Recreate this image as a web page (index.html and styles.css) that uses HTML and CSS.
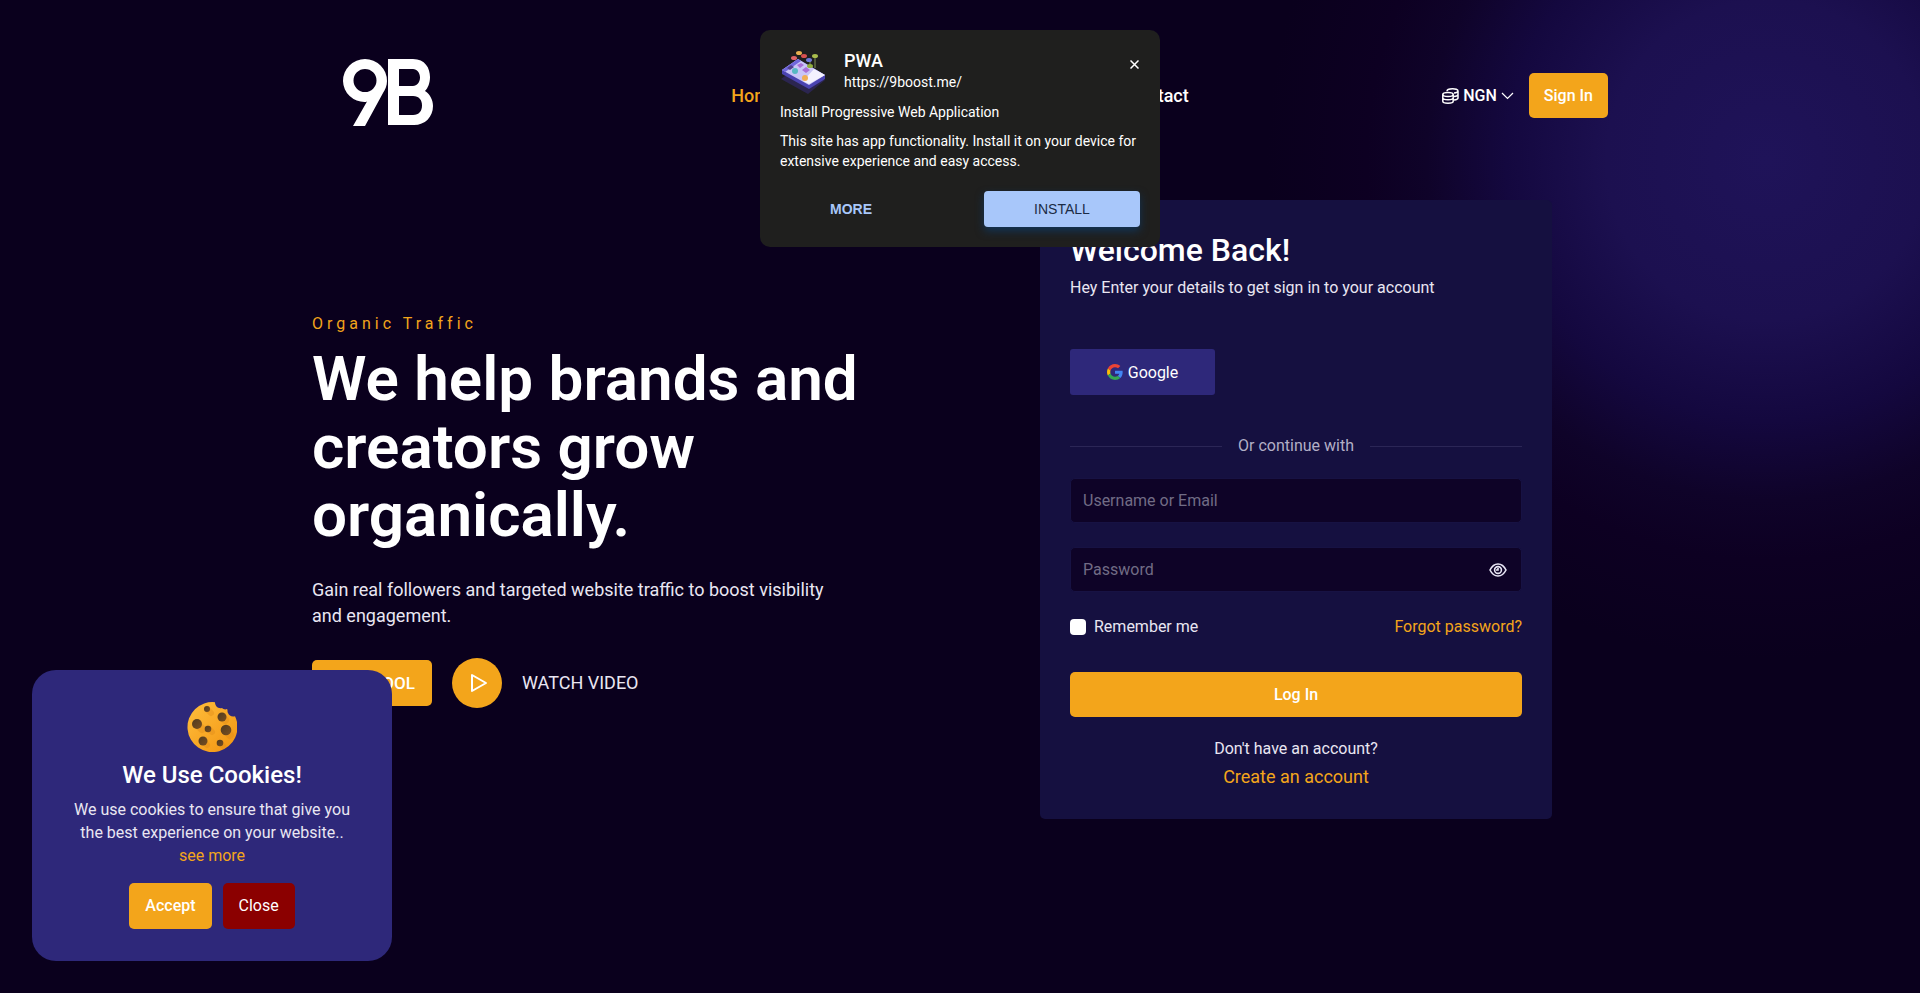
FILE: index.html
```
<!DOCTYPE html>
<html lang="en">

<head>
    <meta charset="UTF-8">
    <meta name="viewport" content="width=device-width, initial-scale=1.0">
    <title>9Boost - Home</title>
    <link rel="stylesheet" href="styles.css">
</head>

<body>
    <header class="header">
        <div class="container header-inner">
            <a href="#" class="logo" aria-label="9B">
                <svg width="90" height="67" viewBox="0 0 90 67" fill="#fff" fill-rule="evenodd">
                    <path d="M22 0A22 22 0 0 1 44 22C44 27 42 31 40 34L22 67H10L24 42.500C23 43 22.500 43 22 43A21.500 21.500 0 0 1 0 22A22 22 0 0 1 22 0ZM22 10a11.500 11.500 0 1 0 0 23 11.500 11.500 0 0 0 0-23Z" />
                    <path d="M45 0H70C82 0 87 9 87 18C87 24 85 29 82 32C87 35 90 41 90 47C90 58 82 66 71 66H45ZM56 10V27H70C74 27 77 23 77 18.500S74 10 70 10ZM56 37V56H70C76 56 79 52 79 46.500S76 37 70 37Z" />
                </svg>
            </a>
            <nav class="nav">
                <a href="#" class="active">Home</a>
                <a href="#">About</a>
                <a href="#">Services</a>
                <a href="#">Blog</a>
                <a href="#">FAQ</a>
                <a href="#">Contact</a>
            </nav>
            <div class="header-actions">
                <button type="button" class="currency">
                    <svg width="17" height="16" viewBox="0 0 17 16" fill="none" stroke="#fff" stroke-width="1.500">
                        <ellipse cx="6" cy="6.500" rx="5.200" ry="2" />
                        <path d="M.8 6.500v6.700c0 2.600 10.400 2.600 10.400 0V6.500M.8 9.800c0 2.600 10.400 2.600 10.400 0M5 3.200C5 0 16 0 16 3v7c0 1-1.500 1.800-4 2M16 3c0 1.200-1.500 1.800-4 2M16 6.500c0 1.200-1.500 1.800-4 2" />
                    </svg>
                    NGN
                    <svg width="13" height="8" viewBox="0 0 13 8" fill="none" stroke="#fff" stroke-width="1.200">
                        <path d="M1 1l5.500 5.500L12 1" />
                    </svg>
                </button>
                <a href="#" class="btn btn-sm">Sign In</a>
            </div>
        </div>
    </header>

    <main class="container hero">
        <section class="hero-text">
            <p class="subtitle">Organic Traffic</p>
            <h1>We help brands and creators grow organically.</h1>
            <p class="lead">Gain real followers and targeted website traffic to boost visibility and engagement.</p>
            <div class="hero-buttons">
                <a href="#" class="btn btn-tool">FREE TOOL</a>
                <a href="#" class="play" aria-label="Play video">
                    <svg width="18" height="20" viewBox="0 0 18 20" fill="none" stroke="#fff" stroke-width="2" stroke-linejoin="round">
                        <path d="M2 2v16L16 10Z" />
                    </svg>
                </a>
                <a href="#" class="watch">WATCH VIDEO</a>
            </div>
        </section>

        <form class="login-card">
            <h2>Welcome Back!</h2>
            <p>Hey Enter your details to get sign in to your account</p>
            <button type="button" class="google">
                <svg width="16" height="16" viewBox="0 0 48 48">
                    <path fill="#EA4335" d="M24 9.500c3.540 0 6.710 1.220 9.210 3.600l6.850-6.850C35.900 2.380 30.470 0 24 0 14.620 0 6.510 5.380 2.560 13.220l7.980 6.190C12.430 13.720 17.740 9.500 24 9.500z" />
                    <path fill="#4285F4" d="M46.980 24.550c0-1.570-.15-3.090-.38-4.550H24v9.020h12.940c-.58 2.960-2.260 5.480-4.780 7.180l7.730 6c4.510-4.180 7.090-10.360 7.090-17.650z" />
                    <path fill="#FBBC05" d="M10.530 28.590A14.500 14.500 0 0 1 9.770 24c0-1.600.27-3.140.76-4.590l-7.980-6.190A24 24 0 0 0 0 24c0 3.880.92 7.540 2.560 10.780z" />
                    <path fill="#34A853" d="M24 48c6.480 0 11.930-2.130 15.890-5.810l-7.730-6c-2.150 1.450-4.920 2.300-8.160 2.300-6.260 0-11.570-4.220-13.470-9.910l-7.980 6.190C6.510 42.620 14.620 48 24 48z" />
                </svg>
                Google
            </button>
            <div class="divider"><span>Or continue with</span></div>
            <input type="text" class="field" placeholder="Username or Email" aria-label="Username or Email">
            <div class="password">
                <input type="password" class="field" placeholder="Password" aria-label="Password">
                <button type="button" class="eye" aria-label="Show password">
                    <svg width="18" height="14" viewBox="0 0 18 14" fill="none" stroke="#e8e6f5" stroke-width="1.600">
                        <path d="M1 7C3 3 5.800 1 9 1s6 2 8 6c-2 4-4.800 6-8 6S3 11 1 7Z" />
                        <circle cx="9" cy="7" r="3.400" />
                        <path d="M9 5v2H7" />
                    </svg>
                </button>
            </div>
            <div class="options">
                <label><input type="checkbox"> Remember me</label>
                <a href="#">Forgot password?</a>
            </div>
            <button type="submit" class="btn btn-login">Log In</button>
            <p class="signup">Don't have an account?</p>
            <a href="#" class="create">Create an account</a>
        </form>
    </main>

    <!-- install prompt -->
    <div class="pwa" role="dialog" aria-label="Install app">
        <div class="pwa-head">
            <svg width="46" height="46" viewBox="0 0 46 46">
                <path fill="#2b2550" d="M1 29L20 15L45 30L28 44Z" />
                <path fill="#4a43b0" d="M2 20L18 9L45 25V29L29 39L2 24Z" />
                <path fill="#c9c5f7" d="M2 20L18 9L45 25L29 35Z" />
                <path fill="#7067dc" d="M2 20L18 9L21 11L5 22Z" />
                <path fill="#f4f2ff" d="M34 19L45 25L29 34L23 31Z" />
                <path stroke="#7f8f55" d="M35 6v12M30 10v8" />
                <ellipse cx="19" cy="3" rx="3" ry="2" fill="#e8b04f" />
                <ellipse cx="14" cy="8" rx="3" ry="2" fill="#e06367" />
                <ellipse cx="24" cy="6" rx="3" ry="2" fill="#d9504f" />
                <ellipse cx="35" cy="6" rx="3" ry="2" fill="#a9bd4d" />
                <ellipse cx="29" cy="10" rx="3" ry="2" fill="#6f79d8" />
                <ellipse cx="30" cy="16" rx="3" ry="2" fill="#8fae3d" />
                <path fill="#50418f" d="M7 18l4-3 3 2-4 3Z" />
                <path fill="#a86fd6" d="M17 15l4-2 3 2-4 3ZM22 20l4-3 4 3-4 3Z" />
                <circle cx="15" cy="21" r="3" fill="#57b9c4" />
                <circle cx="25" cy="28" r="3" fill="#f0ae55" />
            </svg>
            <div class="pwa-name">
                <strong>PWA</strong>
                <span>https://9boost.me/</span>
            </div>
            <button type="button" class="pwa-close" aria-label="Close">
                <svg width="9" height="9" viewBox="0 0 9 9" stroke="#fff" stroke-width="1.500">
                    <path d="M.5 .5l8 8M8.500 .5l-8 8" />
                </svg>
            </button>
        </div>
        <p>Install Progressive Web Application</p>
        <p>This site has app functionality. Install it on your device for extensive experience and easy access.</p>
        <div class="pwa-buttons">
            <button type="button" class="more">MORE</button>
            <button type="button" class="install">INSTALL</button>
        </div>
    </div>

    <!-- cookie notice -->
    <div class="cookie" role="dialog" aria-label="Cookies">
        <svg width="50" height="50" viewBox="0 0 50 50">
            <defs>
                <linearGradient id="dough" x1="0" y1="0" x2="1" y2="1">
                    <stop offset="0" stop-color="#ffbe3d" />
                    <stop offset="1" stop-color="#f29410" />
                </linearGradient>
                <linearGradient id="chip" x1="0" y1="0" x2="1" y2="1">
                    <stop offset="0" stop-color="#4f3a20" />
                    <stop offset="1" stop-color="#7a4f20" />
                </linearGradient>
            </defs>
            <path fill="url(#dough)" d="M28 .2A25 25 0 1 0 48 14.200C45 15 42 14 41 11C40 9 41 8 40 7C38 8 36 7 35 6C31 7 28 4 28 .2Z" />
            <g stroke="#e08a18" stroke-linecap="round" opacity=".4">
                <path stroke-width="8" d="M10 22l5 5M39 28l4 5M35 15l3 3" />
                <path stroke-width="6" d="M20 7l4 4M16 39l4 4M21 26l4 4M33 41l3 3" />
            </g>
            <g fill="url(#chip)">
                <circle cx="20" cy="7" r="3" />
                <circle cx="35" cy="15" r="4.500" />
                <circle cx="10" cy="22" r="5" />
                <circle cx="21" cy="27" r="3.300" />
                <circle cx="39" cy="28" r="5.300" />
                <circle cx="16" cy="39" r="4.500" />
                <circle cx="33" cy="41" r="3.300" />
            </g>
        </svg>
        <h3>We Use Cookies!</h3>
        <p>We use cookies to ensure that give you the best experience on your website..</p>
        <a href="#">see more</a>
        <div class="cookie-buttons">
            <button type="button" class="btn">Accept</button>
            <button type="button" class="btn btn-close">Close</button>
        </div>
    </div>
</body>

</html>
```
FILE: styles.css
```
* {
    box-sizing: border-box;
}

body {
    margin: 0;
    min-height: 100vh;
    font-family: Roboto, "Liberation Sans", sans-serif;
    font-size: 16px;
    line-height: 24px;
    color: #e9e6f2;
    background: radial-gradient(circle at 92% 160px, #1f1359 0, #1c1050 160px, #14083f 260px, #0f0329 340px, #0d0022 400px, transparent 500px), #0a001d;
}

h1,
h2,
h3,
p {
    margin: 0;
}

a {
    color: #f3a51b;
    text-decoration: none;
}

button,
input {
    font-family: inherit;
    font-size: 16px;
}

button {
    border: none;
    cursor: pointer;
}

.container {
    max-width: 1320px;
    margin: 0 auto;
    padding: 0 12px;
}

.btn {
    display: inline-block;
    padding: 10px 16px;
    border-radius: 5px;
    background-color: #f3a51b;
    color: #fff;
    font-weight: 500;
    line-height: 26px;
    text-align: center;
}

/* header */
.header {
    padding: 59px 0 68px;
}

.header-inner {
    display: grid;
    grid-template-columns: 1fr auto 1fr;
    align-items: center;
}

.logo {
    padding: 0 0 6px 31px;
    line-height: 0;
}

.nav {
    display: flex;
    gap: 32px;
}

.nav a {
    color: #fff;
    font-size: 18px;
    font-weight: 500;
}

.nav a.active {
    color: #f3a51b;
}

.header-actions {
    display: flex;
    justify-content: flex-end;
    align-items: center;
    gap: 15px;
}

.currency {
    display: flex;
    align-items: center;
    gap: 4px;
    padding: 0;
    background: none;
    color: #fff;
    font-weight: 500;
}

.btn-sm {
    padding: 10px 15px;
    line-height: 25px;
}

/* hero */
.hero {
    display: flex;
    justify-content: space-between;
    align-items: center;
}

.hero-text {
    width: 570px;
}

.subtitle {
    color: #f3a51b;
    letter-spacing: 4px;
}

h1 {
    margin-top: 9px;
    color: #fff;
    font-size: 62px;
    font-weight: 600;
    line-height: 68px;
}

.lead {
    max-width: 540px;
    margin-top: 28px;
    font-size: 18px;
    line-height: 26px;
}

.hero-buttons {
    display: flex;
    align-items: center;
    gap: 20px;
    margin-top: 29px;
}

.btn-tool {
    min-width: 120px;
    font-size: 17px;
}

.play {
    display: flex;
    align-items: center;
    justify-content: center;
    width: 50px;
    height: 50px;
    padding-left: 4px;
    border-radius: 50%;
    background-color: #f3a51b;
}

.watch {
    color: #e9e6f2;
    font-size: 18px;
}

/* login card */
.login-card {
    display: flex;
    flex-direction: column;
    width: 512px;
    margin-right: 56px;
    padding: 30px;
    border-radius: 5px;
    background-color: #151040;
}

.login-card h2 {
    margin-bottom: 6px;
    color: #fff;
    font-size: 32px;
    font-weight: 500;
    line-height: 40px;
}

.google {
    display: flex;
    align-items: center;
    justify-content: center;
    gap: 5px;
    width: 145px;
    height: 46px;
    margin-top: 49px;
    border-radius: 3px;
    background-color: #2e287a;
    color: #fff;
}

.divider {
    display: flex;
    align-items: center;
    gap: 16px;
    margin: 39px 0 20px;
    color: #b2afc6;
}

.divider::before,
.divider::after {
    content: "";
    flex: 1;
    height: 1px;
    background-color: #2b2656;
}

.field {
    display: block;
    width: 100%;
    height: 45px;
    padding: 0 12px;
    border: 1px solid #171243;
    border-radius: 5px;
    background-color: #0e0327;
    color: #fff;
}

.field::placeholder {
    color: #716c85;
}

.password {
    position: relative;
    margin-top: 24px;
}

.eye {
    position: absolute;
    top: 16px;
    right: 15px;
    padding: 0;
    background: none;
}

.eye svg {
    display: block;
}

.options {
    display: flex;
    justify-content: space-between;
    margin: 23px 0 33px;
}

.options label {
    display: flex;
    align-items: center;
    gap: 8px;
}

.options input {
    appearance: none;
    width: 16px;
    height: 16px;
    margin: 0;
    border-radius: 4px;
    background-color: #fff;
}

.btn-login {
    padding: 10px 16px;
    line-height: 25px;
}

.signup {
    margin-top: 20px;
    text-align: center;
}

.create {
    margin-top: 4px;
    font-size: 18px;
    text-align: center;
}

/* install prompt */
.pwa {
    position: fixed;
    top: 30px;
    left: 50%;
    width: 400px;
    margin-left: -200px;
    padding: 20px;
    border-radius: 10px;
    background-color: #1f1f1e;
    color: #fff;
    font-size: 14px;
    line-height: 20px;
}

.pwa-head {
    display: flex;
    gap: 18px;
}

.pwa-name {
    flex: 1;
}

.pwa-name strong {
    display: block;
    font-size: 18px;
    font-weight: 500;
    line-height: 22px;
}

.pwa-close {
    align-self: flex-start;
    padding: 4px 1px;
    background: none;
}

.pwa p {
    margin-bottom: 9px;
}

.pwa-head + p {
    margin-top: 6px;
}

.pwa-buttons {
    display: flex;
    justify-content: space-between;
    margin-top: 20px;
}

.pwa-buttons button {
    height: 36px;
    border-radius: 4px;
    font-family: "Liberation Sans", sans-serif;
    font-size: 14px;
}

.more {
    width: 142px;
    background: none;
    color: #a8c7fa;
    font-weight: bold;
}

.install {
    width: 156px;
    background-color: #a8c7fa;
    color: #1b2b45;
    box-shadow: 0 4px 8px #123456;
}

/* cookie notice */
.cookie {
    position: fixed;
    bottom: 32px;
    left: 32px;
    width: 360px;
    padding: 32px 40px;
    border-radius: 24px;
    background-color: #2e287a;
    text-align: center;
}

.cookie svg {
    display: block;
    margin: 0 auto 8px;
}

.cookie h3 {
    margin-bottom: 8px;
    color: #fff;
    font-size: 24px;
    font-weight: 500;
    line-height: 30px;
}

.cookie p,
.cookie a {
    line-height: 23px;
}

.cookie-buttons {
    display: flex;
    justify-content: center;
    gap: 11px;
    margin-top: 15px;
}

.btn-close {
    background-color: #8b0000;
    font-weight: 400;
}
```
